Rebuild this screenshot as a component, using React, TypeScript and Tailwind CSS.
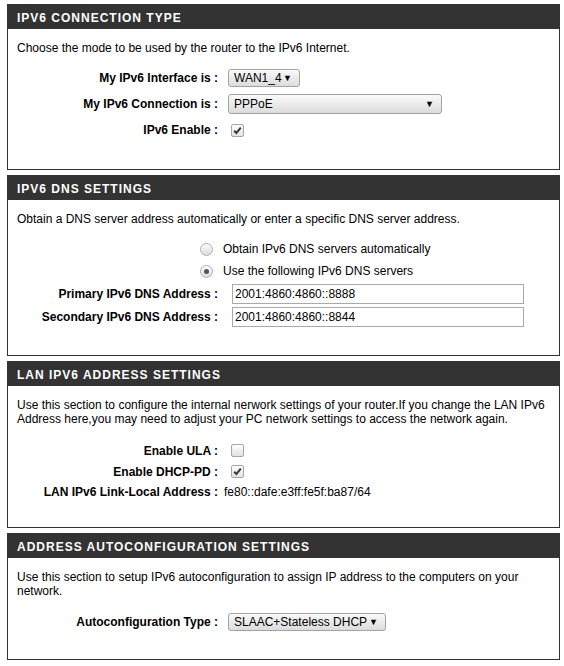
import React from 'react';

const font = "font-['Liberation_Sans',Arial,Helvetica,sans-serif]";

function Section({ title, children }: { title: string; children: React.ReactNode }) {
  return (
    <div className="ml-[7px] w-[553px] border border-[#333]">
      <div className="h-[24px] bg-[#333] pl-[9px] pt-[1px] flex items-center text-[12px] font-bold tracking-[1px] text-white leading-none">
        {title}
      </div>
      {children}
    </div>
  );
}

function Intro({ children }: { children: React.ReactNode }) {
  return (
    <div className="pt-[12px] px-[9px]">
      <p className="leading-[14px]">{children}</p>
    </div>
  );
}

function Row({ label, h, children }: { label: string; h: string; children?: React.ReactNode }) {
  return (
    <div className={`grid grid-cols-[220px_1fr] items-center ${h}`}>
      <div className="text-right pr-[10px] font-bold text-[12px] text-black whitespace-nowrap">{label}</div>
      <div className="flex items-center">{children}</div>
    </div>
  );
}

function Select({ value, w, h = 'h-[18px]' }: { value: string; w: string; h?: string }) {
  return (
    <div
      className={`${w} ${h} flex items-center justify-between border border-[#a3a3a3] rounded-[3px] bg-gradient-to-b from-[#fafafa] to-[#dcdcdc] pl-[5px] pr-[7px] text-[12px] text-black`}
    >
      <span>{value}</span>
      <span className="text-[9px] leading-none">▼</span>
    </div>
  );
}

function Checkbox({ checked }: { checked?: boolean }) {
  return (
    <span className="ml-[3px] w-[13px] h-[13px] rounded-[2px] border border-[#a6a6a6] bg-gradient-to-b from-[#fdfdfd] to-[#e2e2e2] flex items-center justify-center">
      {checked && (
        <svg width="9" height="9" viewBox="0 0 9 9">
          <path d="M1.2 4.8 L3.4 7 L7.8 1.6" fill="none" stroke="#3a3a3a" strokeWidth="2" />
        </svg>
      )}
    </span>
  );
}

function Radio({ checked, label }: { checked?: boolean; label: string }) {
  return (
    <div className="h-[22px] flex items-center pl-[192px]">
      <span className="w-[13px] h-[13px] rounded-full border border-[#b0b0b0] bg-gradient-to-b from-[#fdfdfd] to-[#dcdcdc] flex items-center justify-center">
        {checked && <span className="w-[5px] h-[5px] rounded-full bg-[#555]" />}
      </span>
      <span className="ml-[10px] text-[12px] text-black">{label}</span>
    </div>
  );
}

function TextInput({ value }: { value: string }) {
  return (
    <div className="ml-[4px] w-[292px] h-[20px] border border-[#a9a9a9] bg-white flex items-center pl-[2px] text-[12px] text-black">
      {value}
    </div>
  );
}

export default function App() {
  return (
    <div className={`${font} bg-white min-h-[666px] pt-[4px] flex flex-col gap-[5px] text-[12px] text-black`}>
      <Section title="IPV6 CONNECTION TYPE">
        <Intro>Choose the mode to be used by the router to the IPv6 Internet.</Intro>
        <div className="pt-[10px] pb-[26px]">
          <Row label="My IPv6 Interface is :" h="h-[26px]">
            <Select value="WAN1_4" w="w-[72px]" />
          </Row>
          <Row label="My IPv6 Connection is :" h="h-[26px]">
            <Select value="PPPoE" w="w-[214px]" h="h-[20px]" />
          </Row>
          <Row label="IPv6 Enable :" h="h-[26px]">
            <Checkbox checked />
          </Row>
        </div>
      </Section>

      <Section title="IPV6 DNS SETTINGS">
        <Intro>Obtain a DNS server address automatically or enter a specific DNS server address.</Intro>
        <div className="pt-[12px] pb-[27px]">
          <Radio label="Obtain IPv6 DNS servers automatically" />
          <Radio checked label="Use the following IPv6 DNS servers" />
          <Row label="Primary IPv6 DNS Address :" h="h-[23px]">
            <TextInput value="2001:4860:4860::8888" />
          </Row>
          <Row label="Secondary IPv6 DNS Address :" h="h-[23px]">
            <TextInput value="2001:4860:4860::8844" />
          </Row>
        </div>
      </Section>

      <Section title="LAN IPV6 ADDRESS SETTINGS">
        <Intro>
          Use this section to configure the internal nerwork settings of your router.If you change the LAN IPv6
          Address here,you may need to adjust your PC network settings to access the network again.
        </Intro>
        <div className="pt-[14px] pb-[25px]">
          <Row label="Enable ULA :" h="h-[21px]">
            <Checkbox />
          </Row>
          <Row label="Enable DHCP-PD :" h="h-[21px]">
            <Checkbox checked />
          </Row>
          <Row label="LAN IPv6 Link-Local Address :" h="h-[20px]">
            <span className="-ml-[4px]">fe80::dafe:e3ff:fe5f:ba87/64</span>
          </Row>
        </div>
      </Section>

      <Section title="ADDRESS AUTOCONFIGURATION SETTINGS">
        <Intro>
          Use this section to setup IPv6 autoconfiguration to assign IP address to the computers on your network.
        </Intro>
        <div className="pt-[11px] pb-[24px]">
          <Row label="Autoconfiguration Type :" h="h-[26px]">
            <Select value="SLAAC+Stateless DHCP" w="w-[158px]" />
          </Row>
        </div>
      </Section>
    </div>
  );
}
